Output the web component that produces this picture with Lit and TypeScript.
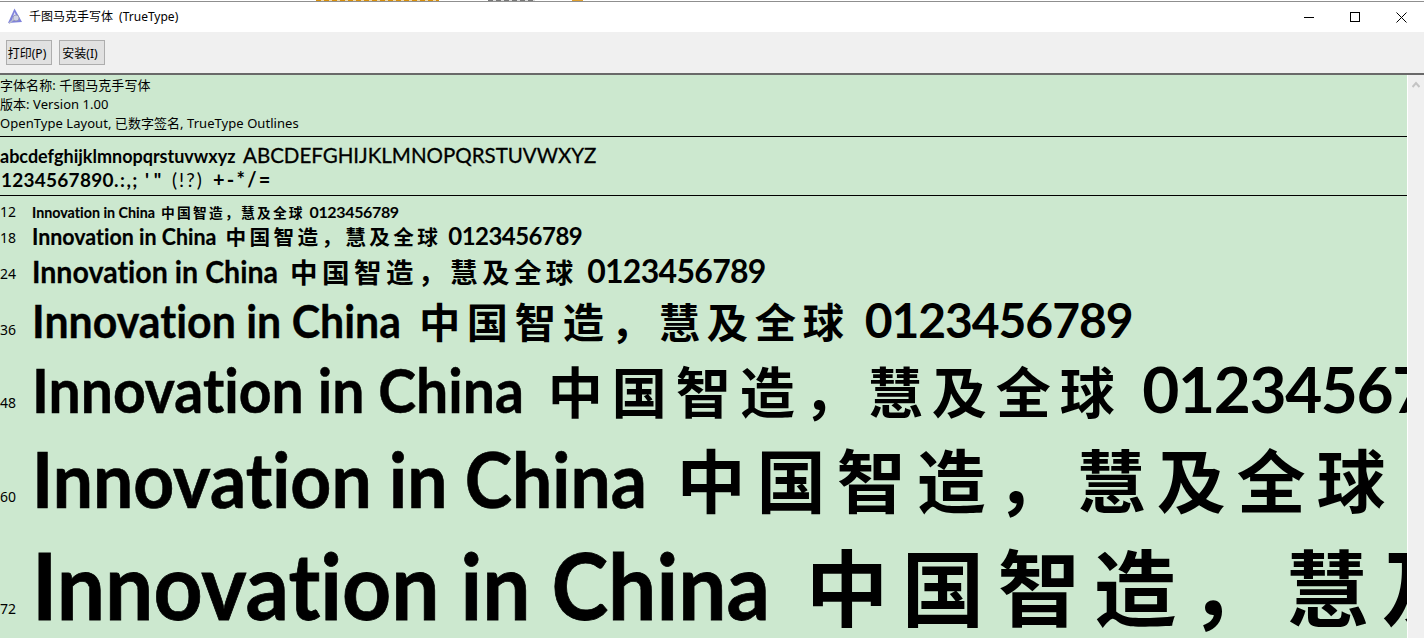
import { LitElement, html, css, svg } from "lit";
import { customElement } from "lit/decorators.js";

const SIZES = [
  { label: 12, e: 16, h: 20, n: -1 },
  { label: 18, e: 24, h: 31, n: -2 },
  { label: 24, e: 32, h: 41, n: -4 },
  { label: 36, e: 48, h: 61, n: -3 },
  { label: 48, e: 64, h: 80, n: -5 },
  { label: 60, e: 80, h: 98, n: -6 },
  { label: 72, e: 96, h: 103, n: -6 },
];

@customElement("app-root")
export class AppRoot extends LitElement {
  static styles = css`
    :host { display: block; width: 1424px; height: 638px; overflow: hidden; background: #fff; color: #000; font-family: "Noto Sans", "Noto Sans CJK SC", sans-serif; }
    .strip {
      height: 1px;
      background-color: #fff;
      background-repeat: no-repeat;
      background-image:
        repeating-linear-gradient(90deg, #d98f0a 0 5px, #f2d9a8 5px 8px),
        repeating-linear-gradient(90deg, #777 0 5px, #ddd 5px 8px),
        linear-gradient(#e0a030, #e0a030);
      background-size: 123px 1px, 47px 1px, 11px 1px;
      background-position: 316px 0, 488px 0, 572px 0;
    }
    .title { height: 31px; border-top: 1px solid #8f8f8f; display: flex; align-items: center; background: #fff; box-sizing: border-box; }
    .logo { margin: -3px 0 0 7px; width: 16px; height: 16px; flex: none; }
    .tname { margin-left: 6px; font-size: 12px; line-height: 18px; word-spacing: 3px; margin-top: -1px; }
    .spacer { flex: 1; }
    .wbtn { width: 46px; height: 30px; display: flex; align-items: center; justify-content: center; }
    .bar { height: 41px; background: #f0f0f0; display: flex; align-items: center; gap: 7px; padding-left: 6px; border-bottom: 2px solid #696969; }
    .bar button { width: 46px; height: 25px; padding: 0 4px 0 0; background: #e1e1e1; border: 1px solid #adadad; font: 12px "Noto Sans", "Noto Sans CJK SC", sans-serif; color: #000; }
    .main { display: flex; height: 563px; }
    .view { width: 1407px; flex: none; background: #cce8cf; border-right: 1px solid #fff; overflow: hidden; white-space: nowrap; box-sizing: content-box; }
    .scroll { flex: 1; background: #f0f0f0; display: flex; justify-content: center; padding-top: 6px; }
    .scroll svg { display: block; }
    .info { height: 60px; padding-top: 1px; font-size: 13px; line-height: 19px; letter-spacing: .05px; border-bottom: 1px solid #000; }
    .info div { height: 19px; }
    .chars { height: 59px; padding-top: 6px; border-bottom: 1px solid #000; font-family: "Lato", "Noto Sans CJK SC", sans-serif; font-weight: 700; box-sizing: border-box; }
    .cl { height: 24px; line-height: 24px; display: flex; align-items: baseline; }
    .low { font-size: 18px; width: 243px; font-variant-ligatures: none; }
    .up { font-size: 20.5px; font-weight: 400; -webkit-text-stroke: .3px #000; }
    .dg { font-size: 19px; letter-spacing: .25px; margin-left: 1px; width: 113px; }
    .pn { font-size: 19px; width: 25px; letter-spacing: 1.5px; }
    .qt { font-size: 19px; width: 21px; margin-left: 6px; }
    .par { font-size: 19px; font-weight: 400; width: 41px; margin-left: 6px; letter-spacing: 2px; }
    .op { font-size: 20px; letter-spacing: 2.2px; }
    .rows { padding-top: 8px; }
    .row { display: flex; align-items: baseline; }
    .num { width: 32px; flex: none; font-size: 14px; line-height: 1; transform: translateY(var(--n)); }
    .sample { line-height: 1; font-size: var(--e); font-family: "Lato", "Noto Sans CJK SC", sans-serif; font-weight: 700; }
    .lat { display: inline-block; width: calc(var(--e) * 8.06); white-space: nowrap; }
    .lat b { display: inline-block; font-weight: 700; font-size: calc(var(--e) * 0.96); font-variant-ligatures: none; -webkit-text-stroke: calc(var(--e) * 0.008) #000; transform: scaleX(.93); transform-origin: left center; }
    .cjk { font-family: "Noto Sans CJK SC", sans-serif; font-size: calc(var(--e) * 0.86); letter-spacing: calc(var(--e) * 0.14); }
    .dig { margin-left: calc(var(--e) * 0.29); letter-spacing: calc(var(--e) * -0.022); }
  `;
  render() {
    return html`
      <div class="strip"></div>
      <div class="title">
        <svg class="logo" viewBox="0 0 16 16">
          <path d="M7.5 .5 L15 14 L1 15 Z" fill="#7f82dc" />
          <path d="M7.5 4 L11 11 L5 12 Z" fill="#dfe0f6" />
          <circle cx="9" cy="10" r="3" fill="#cfd2e4" stroke="#8f92b0" stroke-width=".8" />
          <path d="M2 15.5 L7 11" stroke="#b8bccc" stroke-width="1.4" />
        </svg>
        <span class="tname">千图马克手写体 (TrueType)</span>
        <span class="spacer"></span>
        <span class="wbtn"><svg width="10" height="10" viewBox="0 0 10 10">${svg`<path d="M0 5.5H10" stroke="#000"/>`}</svg></span>
        <span class="wbtn"><svg width="10" height="10" viewBox="0 0 10 10">${svg`<rect x=".5" y=".5" width="9" height="9" fill="none" stroke="#000"/>`}</svg></span>
        <span class="wbtn"><svg width="11" height="11" viewBox="0 0 11 11">${svg`<path d="M.5 .5L10.5 10.5M10.5 .5L.5 10.5" stroke="#000"/>`}</svg></span>
      </div>
      <div class="bar"><button>打印(P)</button><button>安装(I)</button></div>
      <div class="main">
        <div class="view">
          <div class="info">
            <div>字体名称: 千图马克手写体</div>
            <div>版本: Version 1.00</div>
            <div>OpenType Layout, 已数字签名, TrueType Outlines</div>
          </div>
          <div class="chars">
            <div class="cl"><span class="low">abcdefghijklmnopqrstuvwxyz</span><span class="up">ABCDEFGHIJKLMNOPQRSTUVWXYZ</span></div>
            <div class="cl"><span class="dg">1234567890</span><span class="pn">.:,;</span><span class="qt">' "</span><span class="par">(!?)</span><span class="op">+-*/=</span></div>
          </div>
          <div class="rows">
            ${SIZES.map(s => html`
              <div class="row" style="height:${s.h}px;--e:${s.e}px;--n:${s.n}px">
                <span class="num">${s.label}</span>
                <span class="sample"><span class="lat"><b>Innovation in China</b></span><span class="cjk">中国智造，慧及全球</span><span class="dig">0123456789</span></span>
              </div>`)}
          </div>
        </div>
        <div class="scroll">
          <svg width="8" height="7" viewBox="0 0 8 7">${svg`<path d="M.5 6L4 2L7.5 6" fill="none" stroke="#c4c4c4" stroke-width="2"/>`}</svg>
        </div>
      </div>
    `;
  }
}
